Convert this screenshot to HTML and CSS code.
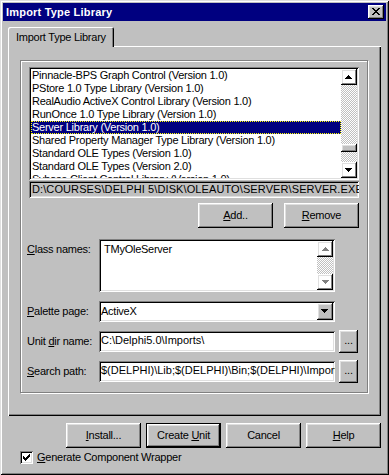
FILE: index.html
```html
<!DOCTYPE html>
<html lang="en">
  <head>
    <meta charset="UTF-8" />
    <meta name="viewport" content="width=device-width, initial-scale=1.0" />
    <title>Import Type Library</title>

    <link rel="stylesheet" href="styles.css">
  </head>

  <body>
    <div class="window">
      <header class="titlebar">
        <span class="title">Import Type Library</span>
        <button class="close-button raised">
          <svg width="8" height="7" viewBox="0 0 8 7" shape-rendering="crispEdges">
            <path d="M0 0h2v1H0zM6 0h2v1H6zM1 1h2v1H1zM5 1h2v1H5zM2 2h4v1H2zM3 3h2v1H3zM2 4h4v1H2zM1 5h2v1H1zM5 5h2v1H5zM0 6h2v1H0zM6 6h2v1H6z" />
          </svg>
        </button>
      </header>

      <div class="client">
        <div class="tab-strip">
          <span class="tab">Import Type Library</span>
        </div>

        <section class="tab-page">
          <div class="group">
            <div class="listbox library-list">
              <ul class="items">
                <li>Pinnacle-BPS Graph Control (Version 1.0)</li>
                <li>PStore 1.0 Type Library (Version 1.0)</li>
                <li>RealAudio ActiveX Control Library (Version 1.0)</li>
                <li>RunOnce 1.0 Type Library (Version 1.0)</li>
                <li class="selected">Server Library (Version 1.0)</li>
                <li>Shared Property Manager Type Library (Version 1.0)</li>
                <li>Standard OLE Types (Version 1.0)</li>
                <li>Standard OLE Types (Version 2.0)</li>
                <li>Sybase Client Control Library (Version 1.0)</li>
              </ul>
              <div class="scrollbar">
                <span class="scroll-button raised">
                  <svg width="7" height="4" viewBox="0 0 7 4" shape-rendering="crispEdges">
                    <path d="M3 0h1v1H3zM2 1h3v1H2zM1 2h5v1H1zM0 3h7v1H0z" />
                  </svg>
                </span>
                <span class="track"><span class="thumb raised"></span></span>
                <span class="scroll-button raised">
                  <svg width="7" height="4" viewBox="0 0 7 4" shape-rendering="crispEdges">
                    <path d="M0 0h7v1H0zM1 1h5v1H1zM2 2h3v1H2zM3 3h1v1H3z" />
                  </svg>
                </span>
              </div>
            </div>

            <div class="file-path">D:\COURSES\DELPHI 5\DISK\OLEAUTO\SERVER\SERVER.EXE</div>

            <div class="list-buttons">
              <button class="button raised"><u>A</u>dd..</button>
              <button class="button raised"><u>R</u>emove</button>
            </div>

            <div class="fields">
              <label class="label label-top"><u>C</u>lass names:</label>
              <div class="listbox class-list">
                <div class="class-items">TMyOleServer</div>
                <div class="scrollbar disabled">
                  <span class="scroll-button raised">
                    <svg width="8" height="5" viewBox="0 0 8 5" shape-rendering="crispEdges">
                      <path class="shine" d="M4 1h1v1H4zM3 2h3v1H3zM2 3h5v1H2zM1 4h7v1H1z" />
                      <path d="M3 0h1v1H3zM2 1h3v1H2zM1 2h5v1H1zM0 3h7v1H0z" />
                    </svg>
                  </span>
                  <span class="track"></span>
                  <span class="scroll-button raised">
                    <svg width="8" height="5" viewBox="0 0 8 5" shape-rendering="crispEdges">
                      <path class="shine" d="M1 1h7v1H1zM2 2h5v1H2zM3 3h3v1H3zM4 4h1v1H4z" />
                      <path d="M0 0h7v1H0zM1 1h5v1H1zM2 2h3v1H2zM3 3h1v1H3z" />
                    </svg>
                  </span>
                </div>
              </div>
              <span></span>

              <label class="label"><u>P</u>alette page:</label>
              <div class="combobox sunken">
                <span class="value">ActiveX</span>
                <span class="drop-button raised">
                  <svg width="7" height="4" viewBox="0 0 7 4" shape-rendering="crispEdges">
                    <path d="M0 0h7v1H0zM1 1h5v1H1zM2 2h3v1H2zM3 3h1v1H3z" />
                  </svg>
                </span>
              </div>
              <span></span>

              <label class="label">Unit <u>d</u>ir name:</label>
              <div class="edit sunken">C:\Delphi5.0\Imports\</div>
              <button class="browse-button raised">...</button>

              <label class="label"><u>S</u>earch path:</label>
              <div class="edit sunken">$(DELPHI)\Lib;$(DELPHI)\Bin;$(DELPHI)\Imports</div>
              <button class="browse-button raised">...</button>
            </div>
          </div>
        </section>

        <div class="dialog-buttons">
          <button class="button raised"><u>I</u>nstall...</button>
          <button class="button default">Create <u>U</u>nit</button>
          <button class="button raised">Cancel</button>
          <button class="button raised"><u>H</u>elp</button>
        </div>

        <label class="checkbox">
          <span class="check-box sunken">
            <svg width="7" height="7" viewBox="0 0 7 7" shape-rendering="crispEdges">
              <path d="M6 0h1v1H6zM5 1h2v1H5zM0 2h1v1H0zM4 2h3v1H4zM0 3h2v1H0zM3 3h3v1H3zM0 4h5v1H0zM1 5h3v1H1zM2 6h1v1H2z" />
            </svg>
          </span>
          <span><u>G</u>enerate Component Wrapper</span>
        </label>
      </div>
    </div>
  </body>
</html>
```

FILE: styles.css
```css
*,
*::before,
*::after {
  box-sizing: border-box;
}

body {
  font-family: 'Liberation Sans', Arial, sans-serif;
  font-size: 11px;
  line-height: 13px;
  letter-spacing: -0.25px;
  color: #000;
  background: #c0c0c0;
  margin: 0;
}

button {
  font: inherit;
  letter-spacing: inherit;
  color: inherit;
  background: #c0c0c0;
  border: 0;
  padding: 0;
}

u {
  text-underline-offset: 1px;
}

/* bevels */
.raised {
  box-shadow: inset -1px -1px #000, inset 1px 1px #fff,
    inset -2px -2px #808080, inset 2px 2px #dfdfdf;
}

.sunken {
  background: #fff;
  box-shadow: inset 1px 1px #808080, inset -1px -1px #fff,
    inset 2px 2px #000, inset -2px -2px #dfdfdf;
}

.window {
  width: 389px;
  height: 475px;
  padding: 3px;
  display: flex;
  flex-direction: column;
  background: #c0c0c0;
  box-shadow: inset 1px 1px #dfdfdf, inset -1px -1px #000,
    inset 2px 2px #fff, inset -2px -2px #808080;
}

.titlebar {
  height: 18px;
  flex: none;
  display: flex;
  align-items: center;
  justify-content: space-between;
  padding: 0 2px 0 3px;
  background: #000080;
  color: #fff;

  .title {
    font-weight: bold;
    letter-spacing: 0.2px;
  }
}

.close-button {
  width: 16px;
  height: 14px;
  display: flex;
  align-items: center;
  justify-content: center;
  padding-bottom: 1px;

  svg {
    fill: #000;
  }
}

.client {
  display: flex;
  flex-direction: column;
  padding: 6px 5px 0 5px;
}

.tab-strip {
  display: flex;
  height: 19px;
}

.tab {
  position: relative;
  z-index: 1;
  width: 106px;
  height: 20px;
  padding-left: 8px;
  line-height: 20px;
  white-space: nowrap;
  background: #c0c0c0;
  border-radius: 2px 2px 0 0;
  box-shadow: inset 1px 1px #fff, inset -1px 0 #000, inset -2px 0 #808080;
}

.tab-page {
  height: 370px;
  padding: 14px 13px 0 12px;
  box-shadow: inset 1px 1px #fff, inset -1px -1px #000,
    inset -2px -2px #808080;
}

.group {
  display: flex;
  flex-direction: column;
  padding: 6px 8px 10px 6px;
  border: 1px solid #808080;
  box-shadow: inset 1px 1px #fff, 1px 1px #fff;
}

.listbox {
  display: flex;
  padding: 2px;
  background: #fff;
  box-shadow: inset 1px 1px #808080, inset -1px -1px #fff,
    inset 2px 2px #000, inset -2px -2px #dfdfdf;
}

.library-list {
  height: 113px;
  margin-left: 2px;

  .items {
    flex: 1;
    margin: 0;
    padding: 0;
    list-style: none;
    overflow: hidden;
  }

  li {
    height: 13px;
    padding-left: 1px;
    white-space: nowrap;
  }

  .selected {
    background: #000080;
    color: #fff;
    outline: 1px dotted #ffff00;
    outline-offset: -1px;
  }
}

.scrollbar {
  width: 16px;
  display: flex;
  flex-direction: column;

  .scroll-button {
    width: 16px;
    height: 16px;
    flex: none;
    display: flex;
    align-items: center;
    justify-content: center;
    padding: 0 1px 1px 0;
  }

  .track {
    flex: 1;
    background: conic-gradient(#c0c0c0 25%, #fff 0 50%, #c0c0c0 0 75%, #fff 0) 0 0 / 2px 2px;
  }

  .thumb {
    display: block;
    height: 8px;
    margin-top: 59px;
    background: #c0c0c0;
  }
}

.scrollbar.disabled {
  .scroll-button {
    padding: 1px 0 0 1px;
  }

  svg {
    fill: #808080;
  }

  .shine {
    fill: #fff;
  }
}

.file-path {
  height: 17px;
  margin: 1px 0 0 2px;
  padding: 2px 2px 2px 3px;
  letter-spacing: 0.1px;
  white-space: nowrap;
  overflow: hidden;
  box-shadow: inset 1px 1px #808080, inset -1px -1px #fff,
    inset 2px 2px #000, inset -2px -2px #dfdfdf;
}

.list-buttons {
  display: flex;
  justify-content: flex-end;
  gap: 11px;
  margin-top: 5px;
}

.button {
  width: 75px;
  height: 25px;
  padding-bottom: 1px;
  text-align: center;
}

.button.default {
  box-shadow: inset 0 0 0 1px #000, inset -2px -2px #000, inset 2px 2px #fff,
    inset -3px -3px #808080, inset 3px 3px #dfdfdf;
}

.fields {
  display: grid;
  grid-template-columns: 72px 236px 1fr;
  grid-template-rows: 53px 21px 21px 21px;
  row-gap: 9px;
  align-items: center;
  margin-top: 11px;

  .label {
    white-space: nowrap;
  }

  .label-top {
    align-self: start;
    padding-top: 4px;
  }
}

.class-list {
  height: 53px;

  .class-items {
    flex: 1;
    padding: 2px 3px;
  }
}

.combobox {
  height: 21px;
  display: flex;
  align-items: center;
  padding: 2px;

  .value {
    flex: 1;
    padding-bottom: 1px;
  }

  .drop-button {
    width: 16px;
    height: 17px;
    display: flex;
    align-items: center;
    justify-content: center;
    background: #c0c0c0;
    padding: 0 1px 1px 0;
  }
}

.edit {
  height: 21px;
  padding: 3px 2px 0 2px;
  letter-spacing: 0;
  white-space: nowrap;
  overflow: hidden;
}

.browse-button {
  justify-self: end;
  width: 19px;
  height: 23px;
  margin: -1px 1px -1px 0;
  padding-bottom: 2px;
}

.dialog-buttons {
  display: flex;
  justify-content: flex-end;
  gap: 5px;
  margin-top: 7px;
}

.checkbox {
  display: flex;
  align-items: center;
  gap: 4px;
  margin: 3px 0 0 12px;

  .check-box {
    width: 13px;
    height: 13px;
    display: flex;
    align-items: center;
    justify-content: center;
  }
}
```
